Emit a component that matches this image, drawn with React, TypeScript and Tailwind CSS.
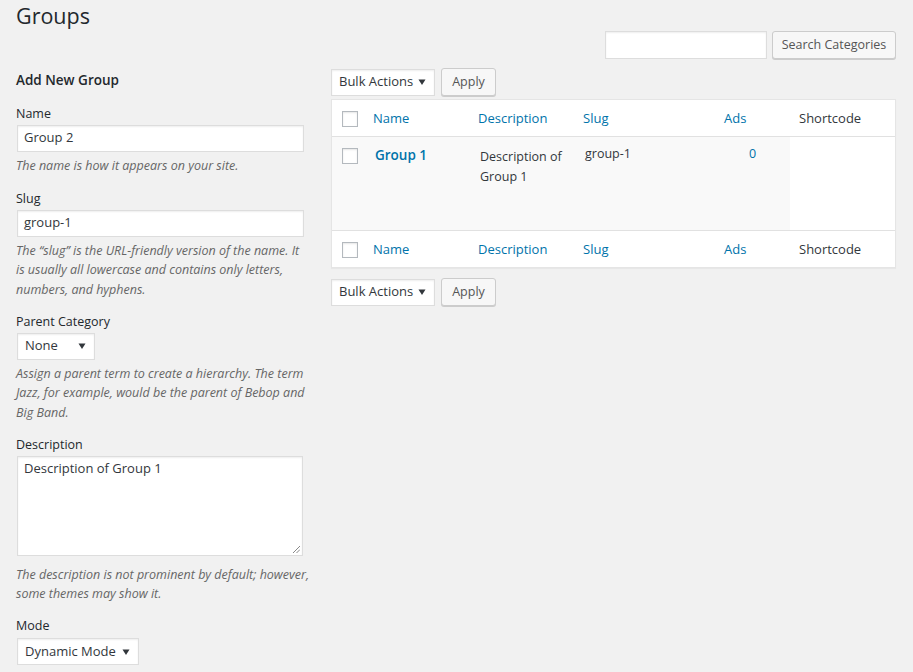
import React from "react";

const font = { fontFamily: '"Open Sans", "Noto Sans", sans-serif' };

const Caret = () => (
  <svg width="8" height="8" viewBox="0 0 8 8" className="shrink-0">
    <path d="M0.5 1.5 L7.5 1.5 L4 7 Z" fill="#32373c" />
  </svg>
);

const Select = (props: { label: string; width: string }) => (
  <div
    className={`flex h-[27px] items-center justify-between whitespace-nowrap border border-[#ddd] bg-white pl-[7px] pr-[8px] text-[13px] text-[#32373c] shadow-[inset_0_1px_2px_rgba(0,0,0,0.07)] ${props.width}`}
  >
    <span>{props.label}</span>
    <Caret />
  </div>
);

const Button = (props: { label: string; width: string }) => (
  <div
    className={`flex h-[28px] items-center justify-center whitespace-nowrap rounded-[3px] border border-[#ccc] bg-[#f7f7f7] text-[12.5px] text-[#555] shadow-[0_1px_0_#ccc] ${props.width}`}
  >
    {props.label}
  </div>
);

const Check = () => (
  <div className="h-[16px] w-[16px] border border-[#b4b9be] bg-white shadow-[inset_0_1px_2px_rgba(0,0,0,0.1)]" />
);

const Help = (props: { children: React.ReactNode; gap?: string }) => (
  <p
    className={`whitespace-nowrap text-[12.5px] italic leading-[19.5px] text-[#666] ${props.gap ?? "mt-[4px]"}`}
  >
    {props.children}
  </p>
);

const Label = (props: { children: React.ReactNode }) => (
  <div className="mb-[1px] text-[12.5px] leading-[19.5px] text-[#23282d]">{props.children}</div>
);

const Input = (props: { value?: string }) => (
  <div className="ml-[1px] flex h-[27px] w-[287px] items-center border border-[#ddd] bg-white px-[6px] text-[13px] text-[#32373c] shadow-[inset_0_1px_2px_rgba(0,0,0,0.07)]">
    {props.value}
  </div>
);

const HeadRow = () => (
  <div className="flex h-[36px] items-center bg-white pt-[1px] text-[13px] text-[#0073aa]">
    <div className="flex w-[32px] justify-end pr-[6px]">
      <Check />
    </div>
    <div className="w-[105px] pl-[9px]">Name</div>
    <div className="w-[105px] pl-[9px]">Description</div>
    <div className="w-[141px] pl-[9px]">Slug</div>
    <div className="w-[75px] pl-[9px]">Ads</div>
    <div className="flex-1 pl-[9px] text-[#32373c]">Shortcode</div>
  </div>
);

const BulkNav = () => (
  <div className="flex items-center gap-[6px]">
    <Select label="Bulk Actions" width="w-[104px]" />
    <Button label="Apply" width="w-[55px]" />
  </div>
);

export default function App() {
  return (
    <div style={font} className="min-h-[672px] bg-[#f1f1f1] pl-[16px] pr-[17px]">
      <h1 className="pt-[1px] text-[21.5px] leading-[29px] text-[#23282d]">Groups</h1>

      <div className="mt-[1px] flex justify-end gap-[5px]">
        <div className="h-[28px] w-[162px] border border-[#ddd] bg-white shadow-[inset_0_1px_2px_rgba(0,0,0,0.07)]" />
        <Button label="Search Categories" width="w-[124px]" />
      </div>

      <div className="mt-[9px] flex">
        {/* left: add form */}
        <div className="w-[300px] shrink-0">
          <h2 className="pt-[3px] text-[13.5px] font-semibold leading-[19px] text-[#23282d]">Add New Group</h2>

          <div className="mt-[14px]">
            <Label>Name</Label>
            <Input value="Group 2" />
            <Help>The name is how it appears on your site.</Help>
          </div>

          <div className="mt-[14px]">
            <Label>Slug</Label>
            <Input value="group-1" />
            <Help>
              The “slug” is the URL-friendly version of the name. It
              <br />
              is usually all lowercase and contains only letters,
              <br />
              numbers, and hyphens.
            </Help>
          </div>

          <div className="mt-[13px]">
            <Label>Parent Category</Label>
            <div className="ml-[1px]">
              <Select label="None" width="w-[78px]" />
            </div>
            <Help>
              Assign a parent term to create a hierarchy. The term
              <br />
              Jazz, for example, would be the parent of Bebop and
              <br />
              Big Band.
            </Help>
          </div>

          <div className="mt-[13px]">
            <Label>Description</Label>
            <div className="relative ml-[1px] h-[100px] w-[286px] border border-[#ddd] bg-white px-[6px] pt-[2px] text-[13px] text-[#32373c] shadow-[inset_0_1px_2px_rgba(0,0,0,0.07)]">
              Description of Group 1
              <svg width="8" height="8" viewBox="0 0 8 8" className="absolute bottom-[2px] right-[2px]">
                <path d="M1 8 L8 1 M4.5 8 L8 4.5" stroke="#888" strokeWidth="1" />
              </svg>
            </div>
            <Help gap="mt-[9px]">
              The description is not prominent by default; however,
              <br />
              some themes may show it.
            </Help>
          </div>

          <div className="mt-[12px]">
            <Label>Mode</Label>
            <div className="ml-[1px] mt-[3px]">
              <Select label="Dynamic Mode" width="w-[122px]" />
            </div>
          </div>
        </div>

        {/* right: list table */}
        <div className="ml-[15px] flex-1">
          <BulkNav />
          <div className="mt-[3px] border border-[#e5e5e5] shadow-[0_1px_1px_rgba(0,0,0,0.04)]">
            <div className="border-b border-[#e1e1e1]">
              <HeadRow />
            </div>
            <div className="flex h-[94px] border-b border-[#e1e1e1] text-[12.5px] text-[#32373c]">
              <div className="flex w-[32px] justify-end bg-[#f9f9f9] pr-[6px] pt-[11px]">
                <Check />
              </div>
              <div className="w-[105px] bg-[#f9f9f9] pl-[11px] pt-[8px] text-[13.5px] font-semibold text-[#0073aa]">
                Group 1
              </div>
              <div className="w-[105px] bg-[#f9f9f9] pl-[11px] pr-[6px] pt-[10px] leading-[19.5px]">
                Description of Group 1
              </div>
              <div className="w-[141px] bg-[#f9f9f9] pl-[11px] pt-[8px]">group-1</div>
              <div className="w-[75px] bg-[#f9f9f9] pt-[8px] text-center text-[#0073aa]">0</div>
              <div className="flex-1 bg-white" />
            </div>
            <HeadRow />
          </div>
          <div className="mt-[10px]">
            <BulkNav />
          </div>
        </div>
      </div>
    </div>
  );
}
